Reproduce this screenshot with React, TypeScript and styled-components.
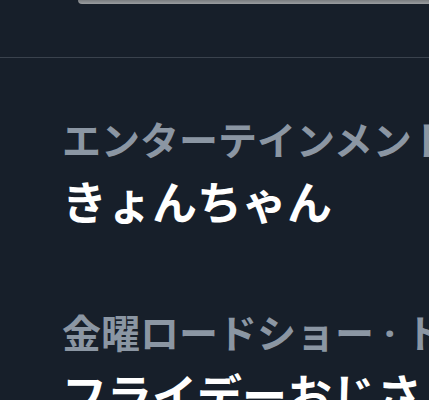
import styled, { createGlobalStyle } from "styled-components";

const GlobalStyle = createGlobalStyle`
  html, body {
    margin: 0;
    padding: 0;
    background: #171f2a;
  }
  body {
    font-family: "Noto Sans CJK JP", "Noto Sans", sans-serif;
  }
`;

const Page = styled.div`
  width: 429px;
  height: 400px;
  overflow: hidden;
  background: #171f2a;
`;

const Header = styled.div`
  height: 57px;
  border-bottom: 1px solid #3a424d;
  display: flex;
  justify-content: flex-end;
  align-items: flex-start;
`;

const CardEdge = styled.div`
  width: 351px;
  height: 4px;
  background: linear-gradient(#7a7d80, #9a9da0);
  border-bottom-left-radius: 14px;
`;

const TrendList = styled.div`
  display: flex;
  flex-direction: column;
  padding-top: 53px;
`;

const Trend = styled.div`
  display: flex;
  flex-direction: column;
  padding: 0 0 0 62px;
  height: 193px;
  white-space: nowrap;
  overflow: hidden;
`;

const Category = styled.div`
  color: #8b96a3;
  font-size: 39px;
  font-weight: 700;
  line-height: 54px;
`;

const Separator = styled.span`
  font-family: "Noto Sans", sans-serif;
`;

const Title = styled.div`
  color: #ffffff;
  font-size: 45px;
  font-weight: 700;
  line-height: 64px;
  margin-top: 2px;
`;

const trends = [
  { topic: "エンターテインメント", title: "きょんちゃん" },
  { topic: "金曜ロードショー", title: "フライデーおじさん" },
];

export default function App() {
  return (
    <Page>
      <GlobalStyle />
      <Header>
        <CardEdge />
      </Header>
      <TrendList>
        {trends.map((t) => (
          <Trend key={t.title}>
            <Category>
              {t.topic}
              <Separator> · </Separator>
              トレンド
            </Category>
            <Title>{t.title}</Title>
          </Trend>
        ))}
      </TrendList>
    </Page>
  );
}
